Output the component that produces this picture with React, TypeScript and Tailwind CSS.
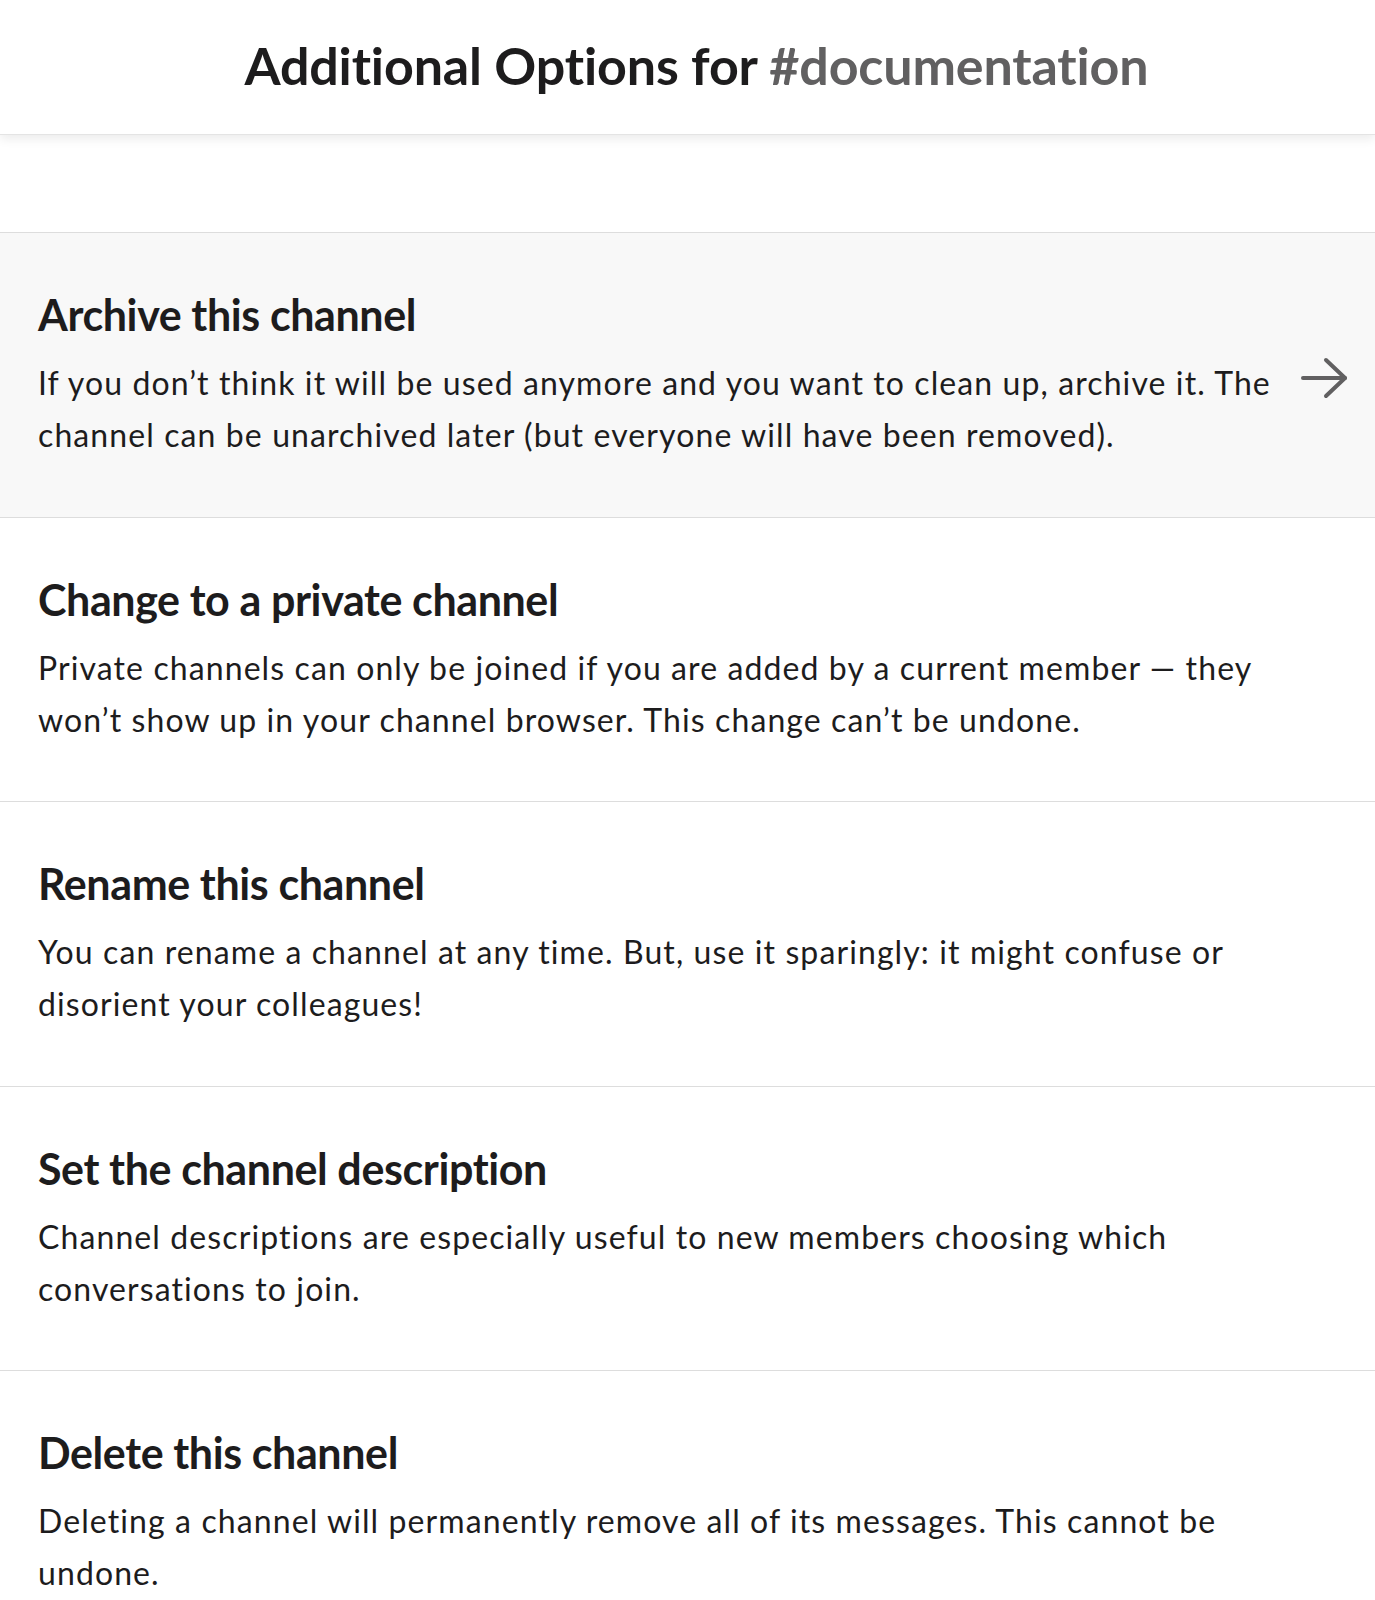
import React from "react";

const options = [
  {
    title: "Archive this channel",
    body: "If you don’t think it will be used anymore and you want to clean up, archive it. The channel can be unarchived later (but everyone will have been removed).",
    active: true,
  },
  {
    title: "Change to a private channel",
    body: "Private channels can only be joined if you are added by a current member — they won’t show up in your channel browser. This change can’t be undone.",
  },
  {
    title: "Rename this channel",
    body: "You can rename a channel at any time. But, use it sparingly: it might confuse or disorient your colleagues!",
  },
  {
    title: "Set the channel description",
    body: "Channel descriptions are especially useful to new members choosing which conversations to join.",
  },
  {
    title: "Delete this channel",
    body: "Deleting a channel will permanently remove all of its messages. This cannot be undone.",
  },
];

const Arrow = () => (
  <svg width="48" height="42" viewBox="0 0 48 42" fill="none" stroke="#616061" strokeWidth="4" strokeLinecap="round" strokeLinejoin="round">
    <path d="M3 21H45" />
    <path d="M26 3L45 21L26 39" />
  </svg>
);

export default function App() {
  return (
    <div className="min-h-screen bg-white font-['Lato','Noto_Sans',sans-serif] text-[#1d1c1d] overflow-hidden">
      <div className="relative z-10 h-[135px] pt-[35px] pl-[18px] text-center border-b border-[#e4e4e4] shadow-[0_4px_10px_rgba(0,0,0,0.08)] bg-white">
        <h1 className="text-[52px] leading-[60px] font-bold tracking-[-0.15px]">
          Additional Options for <span className="text-[#616061]">#documentation</span>
        </h1>
      </div>
      <div className="h-[97px]" />
      {options.map((o) => (
        <div
          key={o.title}
          className={`flex items-center border-t border-[#dddddd] pl-[38px] pr-[27px] pt-[57px] pb-[55.5px] ${o.active ? "bg-[#f8f8f8]" : "bg-white"}`}
        >
          <div className="flex-1">
            <h2 className="text-[43px] leading-[50px] font-bold tracking-[-0.4px]">{o.title}</h2>
            <p className="mt-[17px] text-[32px] leading-[52px] tracking-[1.1px]">{o.body}</p>
          </div>
          <div className="ml-[12px] mt-[4px] w-[48px] flex-none">{o.active && <Arrow />}</div>
        </div>
      ))}
    </div>
  );
}
